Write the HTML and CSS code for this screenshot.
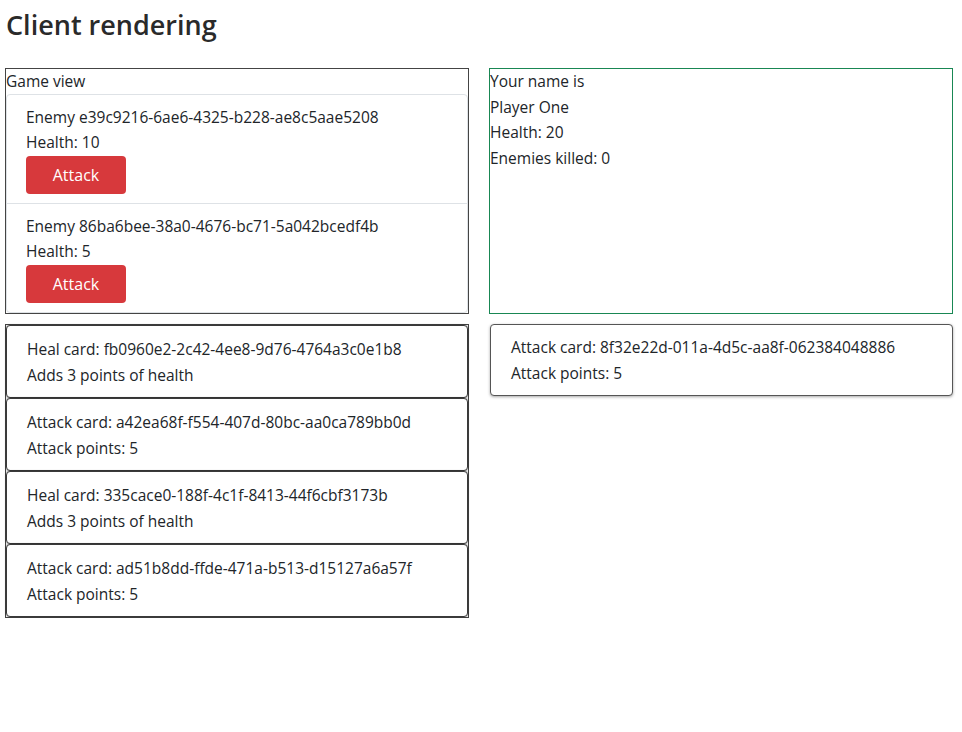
FILE: index.html
```html
<!DOCTYPE html>
<html lang="en">
<head>
<meta charset="utf-8">
<title>Client rendering</title>
<link rel="stylesheet" href="styles.css">
</head>
<body>
<h2 class="title">Client rendering</h2>
<div class="grid">
  <div class="game-view">
    <div class="game-label">Game view</div>
    <div class="enemy-list">
      <div class="enemy">
        <p class="line">Enemy e39c9216-6ae6-4325-b228-ae8c5aae5208</p>
        <p class="line">Health: 10</p>
        <button class="btn-attack">Attack</button>
      </div>
      <div class="enemy">
        <p class="line">Enemy 86ba6bee-38a0-4676-bc71-5a042bcedf4b</p>
        <p class="line">Health: 5</p>
        <button class="btn-attack">Attack</button>
      </div>
    </div>
  </div>
  <div class="player">
    <p class="pline">Your name is</p>
    <p class="pline">Player One</p>
    <p class="pline">Health: 20</p>
    <p class="pline">Enemies killed: 0</p>
  </div>
  <div class="hand">
    <div class="card">
      <p class="line">Heal card: fb0960e2-2c42-4ee8-9d76-4764a3c0e1b8</p>
      <p class="line">Adds 3 points of health</p>
    </div>
    <div class="card">
      <p class="line">Attack card: a42ea68f-f554-407d-80bc-aa0ca789bb0d</p>
      <p class="line">Attack points: 5</p>
    </div>
    <div class="card">
      <p class="line">Heal card: 335cace0-188f-4c1f-8413-44f6cbf3173b</p>
      <p class="line">Adds 3 points of health</p>
    </div>
    <div class="card">
      <p class="line">Attack card: ad51b8dd-ffde-471a-b513-d15127a6a57f</p>
      <p class="line">Attack points: 5</p>
    </div>
  </div>
  <div class="played">
    <div class="card card-single">
      <p class="line">Attack card: 8f32e22d-011a-4d5c-aa8f-062384048886</p>
      <p class="line">Attack points: 5</p>
    </div>
  </div>
</div>
</body>
</html>
```
FILE: styles.css
```css
* { box-sizing: border-box; }
html, body { background: #fff; }
body {
  margin: 0;
  padding: 0 9px 0 5px;
  font-family: "Open Sans", "Noto Sans", sans-serif;
  font-size: 15.5px;
  line-height: 24px;
  color: #212529;
}
.title {
  margin: 8px 0 26px 1px;
  font-size: 27px;
  line-height: 34px;
  font-weight: 600;
  color: #2a2a2a;
}
.grid {
  display: grid;
  grid-template-columns: 1fr 1fr;
  column-gap: 20px;
  row-gap: 10px;
  align-items: start;
}
.game-view {
  border: 1px solid #444;
}
.game-label { line-height: 25px; }
.enemy {
  border: 1px solid #dee2e6;
  border-radius: 4px;
  padding: 10px 19px 9px;
}
.enemy + .enemy {
  margin-top: -1px;
  border-top-left-radius: 0;
  border-top-right-radius: 0;
}
.enemy:first-child {
  border-bottom-left-radius: 0;
  border-bottom-right-radius: 0;
}
.line { margin: 0 0 1px; }
.line:last-of-type { margin-bottom: 0; }
.btn-attack {
  display: block;
  margin-top: 2px;
  width: 100px;
  height: 38px;
  background: #d7393c;
  color: #fff;
  border: 0;
  border-radius: 4px;
  font: inherit;
  font-size: 16px;
  cursor: pointer;
}
.player {
  align-self: stretch;
  border: 1px solid #198754;
}
.pline { margin: 0 0 1.5px; }
.hand {
  border: 1px solid #444;
}
.card {
  border: 1px solid #3a3a3a;
  border-radius: 4px;
  padding: 10.5px 20px 10.5px;
  background: #fff;
  box-shadow: 0 0 2px rgba(0, 0, 0, 0.45);
}
.card .line { margin-bottom: 2px; }
.card .line:last-child { margin-bottom: 0; }
.card-single {
  margin-left: 1px;
  border-color: #555;
  padding: 10px 20px;
  box-shadow: 0 1px 3px rgba(0, 0, 0, 0.35);
}
```
